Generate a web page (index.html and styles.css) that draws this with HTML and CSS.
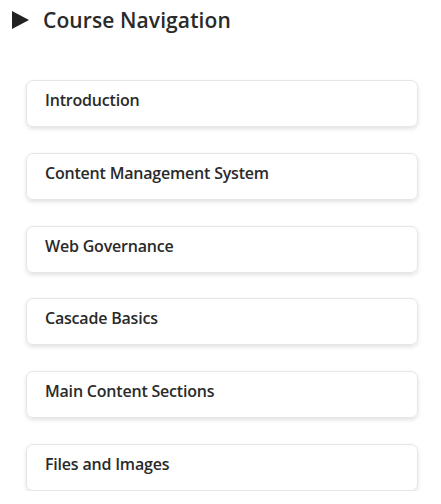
FILE: index.html
```html
<!DOCTYPE html>
<html lang="en">
<head>
<meta charset="utf-8">
<title>Course Navigation</title>
<link rel="stylesheet" href="styles.css">
</head>
<body>
<nav class="course-nav">
  <div class="nav-header">
    <svg class="caret" width="18" height="18" viewBox="0 0 18 18" aria-hidden="true"><polygon points="0,0 17,9 0,18" fill="#222"/></svg>
    <h2 class="nav-title">Course Navigation</h2>
  </div>
  <ul class="nav-list">
    <li class="nav-card">Introduction</li>
    <li class="nav-card">Content Management System</li>
    <li class="nav-card">Web Governance</li>
    <li class="nav-card">Cascade Basics</li>
    <li class="nav-card">Main Content Sections</li>
    <li class="nav-card">Files and Images</li>
  </ul>
</nav>
</body>
</html>
```

FILE: styles.css
```css
html, body {
  margin: 0;
  padding: 0;
  background: #ffffff;
}
body {
  font-family: "Open Sans", "Noto Sans", sans-serif;
  color: #2b2b2b;
}
.course-nav {
  padding: 11px 23px 0 12px;
}
.nav-header {
  display: flex;
  align-items: center;
  gap: 13px;
  height: 18px;
}
.caret {
  flex: none;
  display: block;
}
.nav-title {
  margin: 0;
  font-size: 21px;
  font-weight: 600;
  line-height: 18px;
  letter-spacing: 0.1px;
  color: #2a2a2a;
}
.nav-list {
  list-style: none;
  margin: 51px 0 0 14px;
  padding: 0;
  display: flex;
  flex-direction: column;
  gap: 25.8px;
}
.nav-card {
  box-sizing: border-box;
  height: 47px;
  padding: 0 18px 7px;
  display: flex;
  align-items: center;
  border: 1px solid #e6e6e6;
  border-radius: 7px;
  box-shadow: 0 2px 4px rgba(0,0,0,0.12);
  font-size: 16px;
  font-weight: 600;
  letter-spacing: -0.2px;
  color: #2a2a2a;
}
```
